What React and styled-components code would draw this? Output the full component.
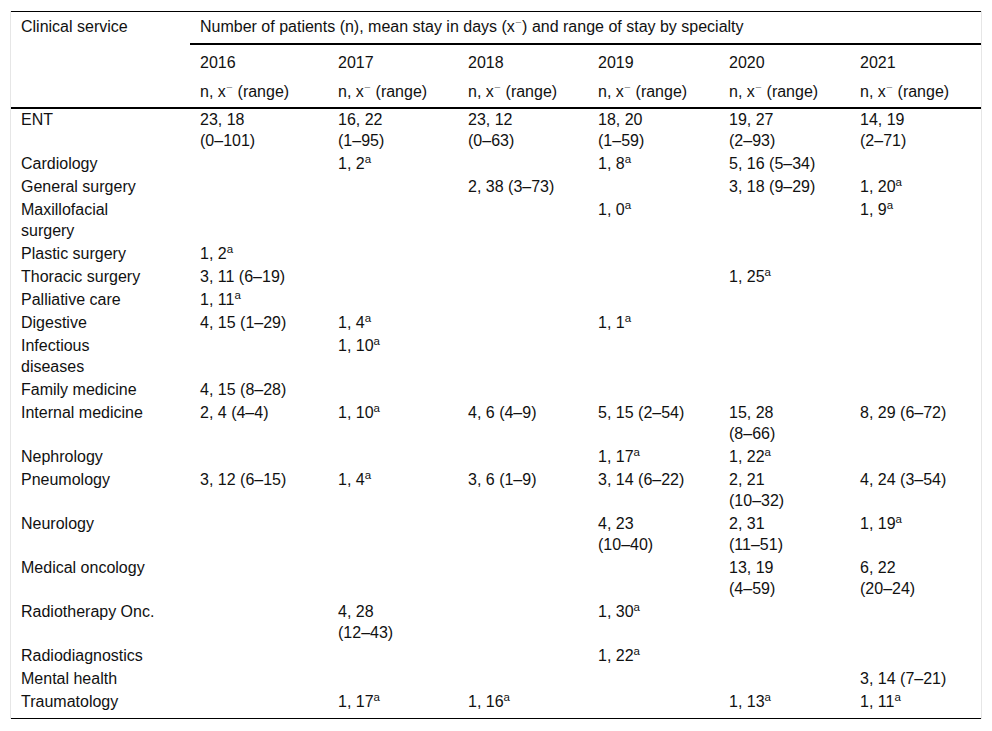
import React from "react";
import styled, { createGlobalStyle } from "styled-components";

const GlobalStyle = createGlobalStyle`
  html, body {
    margin: 0;
    padding: 0;
    background: #ffffff;
  }
  body {
    font-family: "Liberation Sans", Arial, sans-serif;
    color: #111;
  }
`;

const Page = styled.div`
  padding: 11px 10px;
`;

const Frame = styled.div`
  width: 970px;
  border-left: 1px solid #e6e6e6;
  border-right: 1px solid #e6e6e6;
`;

const Table = styled.table`
  width: 970px;
  table-layout: fixed;
  border-collapse: separate;
  border-spacing: 0;
  border-top: 1px solid #000;
  border-bottom: 1px solid #000;
  font-size: 16px;
  color: #111;
`;

const HeadCell = styled.th`
  text-align: left;
  font-weight: normal;
  vertical-align: top;
  line-height: 22px;
  padding: ${(p) => p.$pad || "4px 10px 5px"};
  border-bottom: ${(p) => (p.$rule ? "2px solid #000" : "none")};
  white-space: nowrap;
`;

const Row = styled.tr`
  &:last-child td {
    padding-bottom: 6px;
  }
`;

const Cell = styled.td`
  vertical-align: top;
  line-height: 21px;
  padding: 0 0 2px 10px;
`;

const CellText = styled.div`
  max-width: ${(p) => (p.$first ? "134.5px" : "90px")};
`;

const Chunk = styled.span`
  white-space: nowrap;
`;

const Sup = styled.sup`
  font-size: 0.72em;
  line-height: 0;
  vertical-align: baseline;
  position: relative;
  top: -0.55em;
`;

const Macron = styled.span`
  font-size: 0.6em;
  line-height: 0;
  vertical-align: baseline;
  margin-left: 1px;
  margin-right: 1px;
  position: relative;
  top: -0.35em;
`;

const years = ["2016", "2017", "2018", "2019", "2020", "2021"];
const colWidths = [179, 138, 130, 130, 131, 131, 131];

const rows = [
  ["ENT", "23, 18 (0–101)", "16, 22 (1–95)", "23, 12 (0–63)", "18, 20 (1–59)", "19, 27 (2–93)", "14, 19 (2–71)"],
  ["Cardiology", "", "1, 2^a", "", "1, 8^a", "5, 16 (5–34)", ""],
  ["General surgery", "", "", "2, 38 (3–73)", "", "3, 18 (9–29)", "1, 20^a"],
  ["Maxillofacial surgery", "", "", "", "1, 0^a", "", "1, 9^a"],
  ["Plastic surgery", "1, 2^a", "", "", "", "", ""],
  ["Thoracic surgery", "3, 11 (6–19)", "", "", "", "1, 25^a", ""],
  ["Palliative care", "1, 11^a", "", "", "", "", ""],
  ["Digestive", "4, 15 (1–29)", "1, 4^a", "", "1, 1^a", "", ""],
  ["Infectious diseases", "", "1, 10^a", "", "", "", ""],
  ["Family medicine", "4, 15 (8–28)", "", "", "", "", ""],
  ["Internal medicine", "2, 4 (4–4)", "1, 10^a", "4, 6 (4–9)", "5, 15 (2–54)", "15, 28 (8–66)", "8, 29 (6–72)"],
  ["Nephrology", "", "", "", "1, 17^a", "1, 22^a", ""],
  ["Pneumology", "3, 12 (6–15)", "1, 4^a", "3, 6 (1–9)", "3, 14 (6–22)", "2, 21 (10–32)", "4, 24 (3–54)"],
  ["Neurology", "", "", "", "4, 23 (10–40)", "2, 31 (11–51)", "1, 19^a"],
  ["Medical oncology", "", "", "", "", "13, 19 (4–59)", "6, 22 (20–24)"],
  ["Radiotherapy Onc.", "", "4, 28 (12–43)", "", "1, 30^a", "", ""],
  ["Radiodiagnostics", "", "", "", "1, 22^a", "", ""],
  ["Mental health", "", "", "", "", "", "3, 14 (7–21)"],
  ["Traumatology", "", "1, 17^a", "1, 16^a", "", "1, 13^a", "1, 11^a"],
];

function Value({ text, first }) {
  if (first) return <>{text}</>;
  if (text.endsWith("^a")) {
    return (
      <>
        {text.slice(0, -2)}
        <Sup>a</Sup>
      </>
    );
  }
  const idx = text.indexOf(" (");
  if (idx > 0) {
    return (
      <>
        <Chunk>{text.slice(0, idx)}</Chunk> <Chunk>{text.slice(idx + 1)}</Chunk>
      </>
    );
  }
  return <>{text}</>;
}

function XBar() {
  return (
    <>
      x<Macron>¯</Macron>
    </>
  );
}

export default function App() {
  return (
    <>
      <GlobalStyle />
      <Page>
        <Frame>
          <Table>
            <colgroup>
              {colWidths.map((w, i) => (
                <col key={i} style={{ width: w }} />
              ))}
            </colgroup>
            <thead>
              <tr>
                <HeadCell rowSpan={3} $rule>
                  Clinical service
                </HeadCell>
                <HeadCell colSpan={6} $rule>
                  Number of patients (n), mean stay in days (<XBar />) and range of stay by specialty
                </HeadCell>
              </tr>
              <tr>
                {years.map((y) => (
                  <HeadCell key={y} $pad="7px 10px 2px">
                    {y}
                  </HeadCell>
                ))}
              </tr>
              <tr>
                {years.map((y) => (
                  <HeadCell key={y} $pad="5px 10px 4px" $rule>
                    n, <XBar /> (range)
                  </HeadCell>
                ))}
              </tr>
            </thead>
            <tbody>
              {rows.map((r) => (
                <Row key={r[0]}>
                  {r.map((c, i) => (
                    <Cell key={i}>
                      <CellText $first={i === 0}>
                        <Value text={c} first={i === 0} />
                      </CellText>
                    </Cell>
                  ))}
                </Row>
              ))}
            </tbody>
          </Table>
        </Frame>
      </Page>
    </>
  );
}
